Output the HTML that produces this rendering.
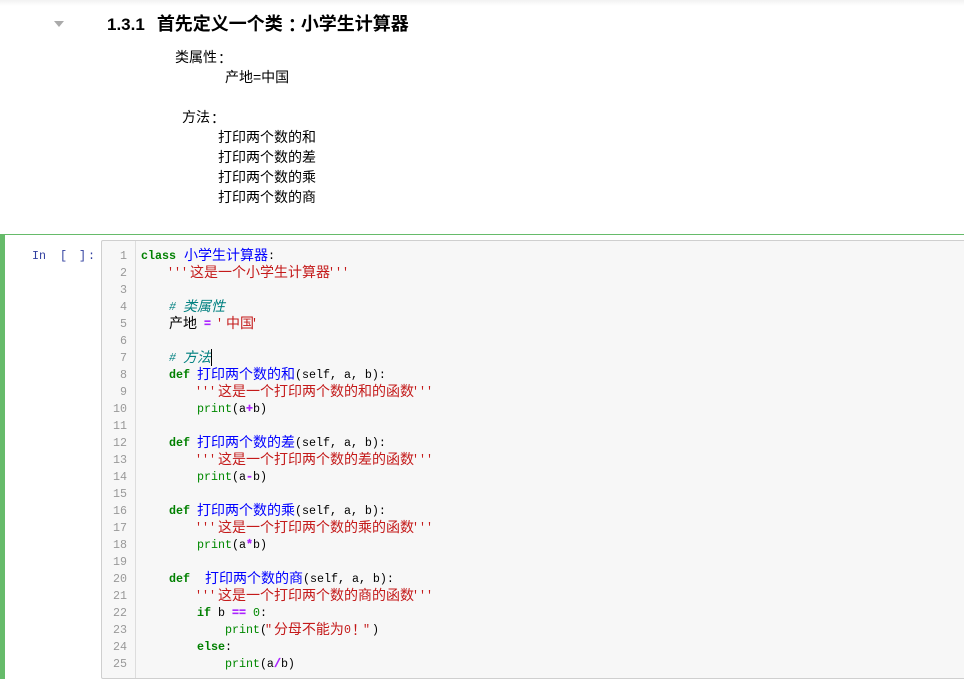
<!DOCTYPE html>
<html><head><meta charset="utf-8">
<style>
html,body{margin:0;padding:0;background:#fff}
body{width:964px;height:679px;position:relative;overflow:hidden;font-family:"Liberation Sans","WenQuanYi Zen Hei","Noto Sans CJK SC",sans-serif}
.a{position:absolute;white-space:pre}
.t{font-size:14px;line-height:20px;color:#000}
.l{position:absolute;left:141px;height:17px;line-height:17px;white-space:pre;font-family:"Liberation Mono","WenQuanYi Zen Hei",monospace;font-size:11.67px;color:#000}
.n{position:absolute;left:101px;width:26px;text-align:right;height:17px;line-height:17px;font-family:"Liberation Mono",monospace;font-size:11.67px;color:#999}
.p{font-family:'Liberation Mono',monospace;font-size:11.67px;line-height:17px;color:#303f9f;top:248px}
i{font-style:normal;font-size:14px;line-height:0;position:relative;top:1px;font-family:"WenQuanYi Zen Hei","Noto Sans CJK SC",sans-serif}
u{text-decoration:none;position:relative;left:-2px}
.tc{font-family:"Noto Sans CJK TC",sans-serif;line-height:0;position:relative;left:-2.5px;top:2px}
.k{color:#008000;font-weight:bold}
.d{color:#00f}
.s{color:#c41a1a}
.c{color:#008080;font-style:italic}
.c i{font-style:italic}
.o{color:#a2f;font-weight:bold;-webkit-text-stroke:.3px #a2f}
.m{color:#080}
</style></head><body>
<div class="a" style="left:0;top:0;width:964px;height:6px;background:linear-gradient(#f2f2f2,#fff)"></div>
<div class="a" style="left:54px;top:21px;width:0;height:0;border-left:5.5px solid transparent;border-right:5.5px solid transparent;border-top:6px solid #aaa"></div>
<div class="a" style="left:107px;top:11px;line-height:24px;font-size:17px;font-weight:bold;color:#000">1.3.1<span style="display:inline-block;width:12px"></span><span style="font-size:18px;font-family:'Noto Sans CJK SC',sans-serif">首先定义一个类<span class="tc" style="left:.5px">：</span>小学生计算器</span></div>
<div class="a t" style="left:175px;top:47px">类属性<span class="tc">：</span></div>
<div class="a t" style="left:225px;top:67px">产地=中国</div>
<div class="a t" style="left:182px;top:107px">方法<span class="tc">：</span></div>
<div class="a t" style="left:218px;top:127px">打印两个数的和</div>
<div class="a t" style="left:218px;top:147px">打印两个数的差</div>
<div class="a t" style="left:218px;top:167px">打印两个数的乘</div>
<div class="a t" style="left:218px;top:187px">打印两个数的商</div>

<div class="a" style="left:0;top:234px;width:964px;height:1px;background:#66bb6a"></div>
<div class="a" style="left:0;top:235px;width:5px;height:444px;background:#66bb6a"></div>
<div class="a" style="left:101px;top:240px;width:870px;height:437px;background:#f7f7f7;border:1px solid #cfcfcf;border-radius:2px"></div>
<div class="a" style="left:135px;top:241px;width:1px;height:437px;background:#ddd"></div>

<div class="a p" style="left:32px">In</div>
<div class="a p" style="left:60px">[</div>
<div class="a p" style="left:79px">]</div>
<div class="a p" style="left:88px">:</div>

<div class="n" style="top:248px">1</div><div class="n" style="top:265px">2</div><div class="n" style="top:282px">3</div><div class="n" style="top:299px">4</div><div class="n" style="top:316px">5</div><div class="n" style="top:333px">6</div><div class="n" style="top:350px">7</div><div class="n" style="top:367px">8</div><div class="n" style="top:384px">9</div><div class="n" style="top:401px">10</div><div class="n" style="top:418px">11</div><div class="n" style="top:435px">12</div><div class="n" style="top:452px">13</div><div class="n" style="top:469px">14</div><div class="n" style="top:486px">15</div><div class="n" style="top:503px">16</div><div class="n" style="top:520px">17</div><div class="n" style="top:537px">18</div><div class="n" style="top:554px">19</div><div class="n" style="top:571px">20</div><div class="n" style="top:588px">21</div><div class="n" style="top:605px">22</div><div class="n" style="top:622px">23</div><div class="n" style="top:639px">24</div><div class="n" style="top:656px">25</div>

<div class="l" style="top:248px"><span class="k">class</span> <span class="d" style="margin-left:1px"><i>小学生计算器</i></span>:</div>
<div class="l" style="top:265px">    <span class="s"><u>'''</u><i>这是一个小学生计算器</i><u>'''</u></span></div>
<div class="l" style="top:299px">    <span class="c"># <i>类属性</i></span></div>
<div class="l" style="top:316px">    <i>产地</i> <span class="o">=</span> <span class="s"><u>'</u><i style="left:1px">中国</i><u>'</u></span></div>
<div class="l" style="top:350px">    <span class="c"># <i>方法</i></span></div>
<div class="a" style="left:211px;top:349px;width:1px;height:17px;background:#000"></div>
<div class="l" style="top:367px">    <span class="k">def</span> <span class="d"><i>打印两个数的和</i></span>(self, a, b):</div>
<div class="l" style="top:384px">        <span class="s"><u>'''</u><i>这是一个打印两个数的和的函数</i><u>'''</u></span></div>
<div class="l" style="top:401px">        <span class="m">print</span>(a<span class="o">+</span>b)</div>
<div class="l" style="top:435px">    <span class="k">def</span> <span class="d"><i>打印两个数的差</i></span>(self, a, b):</div>
<div class="l" style="top:452px">        <span class="s"><u>'''</u><i>这是一个打印两个数的差的函数</i><u>'''</u></span></div>
<div class="l" style="top:469px">        <span class="m">print</span>(a<span class="o">-</span>b)</div>
<div class="l" style="top:503px">    <span class="k">def</span> <span class="d"><i>打印两个数的乘</i></span>(self, a, b):</div>
<div class="l" style="top:520px">        <span class="s"><u>'''</u><i>这是一个打印两个数的乘的函数</i><u>'''</u></span></div>
<div class="l" style="top:537px">        <span class="m">print</span>(a<span class="o">*</span>b)</div>
<div class="l" style="top:571px">    <span class="k">def</span>  <span class="d" style="margin-left:1px"><i>打印两个数的商</i></span>(self, a, b):</div>
<div class="l" style="top:588px">        <span class="s"><u>'''</u><i>这是一个打印两个数的商的函数</i><u>'''</u></span></div>
<div class="l" style="top:605px">        <span class="k">if</span> b <span class="o">==</span> <span class="m">0</span>:</div>
<div class="l" style="top:622px">            <span class="m">print</span>(<span class="s"><u>"</u><i>分母不能为</i>0<i class="tc">！</i><u>"</u></span>)</div>
<div class="l" style="top:639px">        <span class="k">else</span>:</div>
<div class="l" style="top:656px">            <span class="m">print</span>(a<span class="o">/</span>b)</div>
</body></html>
